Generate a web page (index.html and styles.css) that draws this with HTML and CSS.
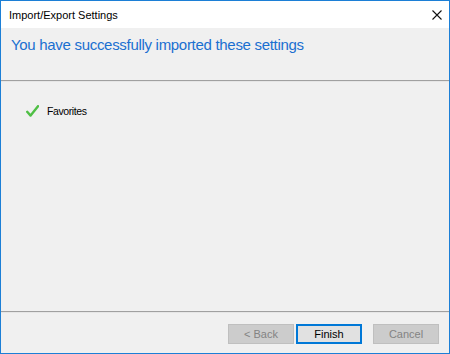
FILE: index.html
```html
<!DOCTYPE html>
<html>
<head>
<meta charset="utf-8">
<link rel="stylesheet" href="styles.css">
</head>
<body>
<div class="window">
  <div class="titlebar">
    <span class="title">Import/Export Settings</span>
    <svg class="close" width="10" height="10" viewBox="0 0 10 10"><path d="M0.5 0.5 L9.5 9.5 M9.5 0.5 L0.5 9.5" stroke="#111" stroke-width="1.1" fill="none"/></svg>
  </div>
  <div class="header">You have successfully imported these settings</div>
  <div class="rule"></div>
  <div class="content">
    <div class="item">
      <svg class="check" width="13" height="12" viewBox="0 0 13 12"><path d="M1.2 6.8 L4.6 10.6 L12 1.2" stroke="#4fbf45" stroke-width="2.4" fill="none" stroke-linecap="round" stroke-linejoin="round"/></svg>
      <span>Favorites</span>
    </div>
  </div>
  <div class="rule"></div>
  <div class="footer">
    <button class="btn disabled">&lt; Back</button>
    <button class="btn primary">Finish</button>
    <button class="btn disabled cancel">Cancel</button>
  </div>
</div>
</body>
</html>
```
FILE: styles.css
```css
html, body {
  margin: 0;
  padding: 0;
  background: #f0f0f0;
}
.window {
  width: 450px;
  height: 354px;
  box-sizing: border-box;
  border: 1px solid #1c7fd6;
  display: flex;
  flex-direction: column;
  background: #f0f0f0;
  font-family: "Liberation Sans", Arial, sans-serif;
}
.titlebar {
  height: 27px;
  background: #fff;
  display: flex;
  align-items: center;
  justify-content: space-between;
  padding: 0 7px 0 8px;
}
.title {
  font-size: 11px;
  color: #000;
  margin-top: 1px;
}
.close {
  display: block;
}
.header {
  height: 52px;
  box-sizing: border-box;
  padding: 8px 0 0 10px;
  font-size: 15px;
  letter-spacing: -0.3px;
  color: #1a6fd0;
}
.rule {
  height: 1px;
  background: #a0a0a0;
  border-bottom: 1px solid #e6e6e6;
}
.content {
  flex: 1;
  padding: 23px 0 0 25px;
}
.item {
  display: flex;
  align-items: center;
  gap: 8px;
  font-size: 10.5px;
  letter-spacing: -0.4px;
  color: #000;
}
.check {
  display: block;
}
.footer {
  height: 40px;
  box-sizing: border-box;
  display: flex;
  justify-content: flex-end;
  align-items: flex-start;
  padding: 11px 10px 0 0;
  gap: 2px;
}
.btn {
  width: 66px;
  height: 20px;
  box-sizing: border-box;
  font-family: "Liberation Sans", Arial, sans-serif;
  font-size: 11px;
  padding: 0;
  margin: 0;
  border: 1px solid #adadad;
  background: #e1e1e1;
  color: #000;
}
.btn.disabled {
  background: #cccccc;
  border-color: #bfbfbf;
  color: #838383;
}
.btn.primary {
  border: 2px solid #0078d7;
}
.btn.cancel {
  margin-left: 9px;
}
```
